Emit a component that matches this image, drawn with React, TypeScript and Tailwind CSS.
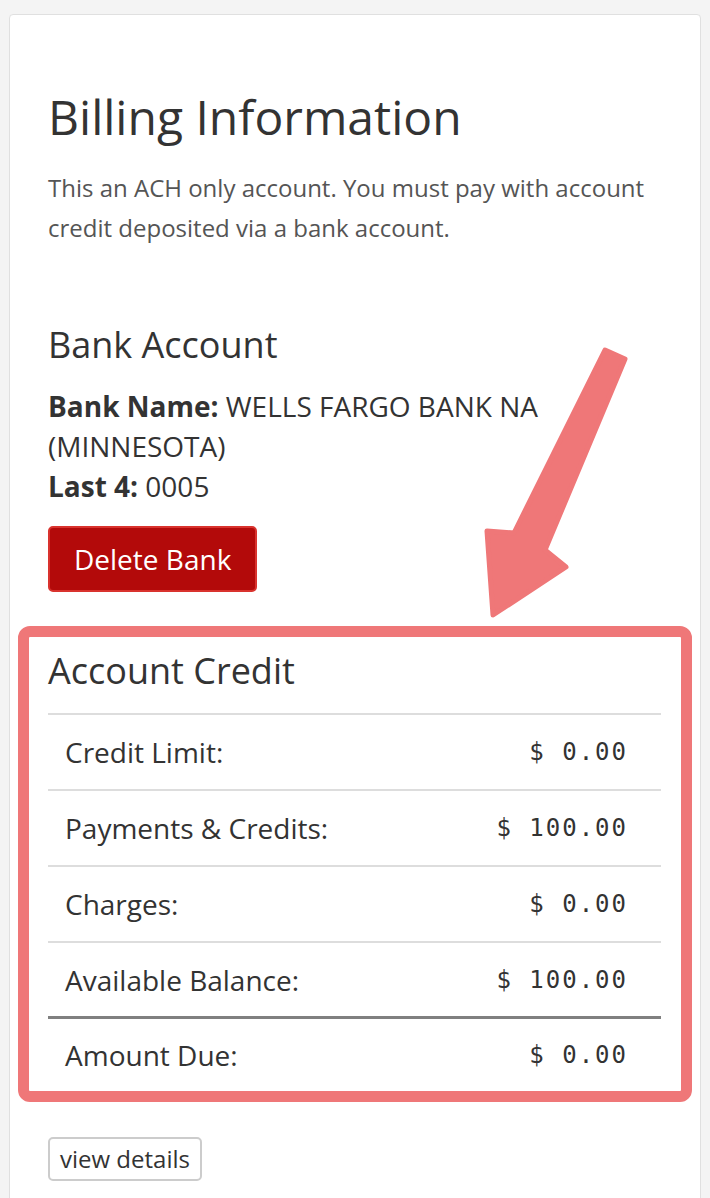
import React from "react";

const rows = [
  { label: "Credit Limit:", value: "$ 0.00" },
  { label: "Payments & Credits:", value: "$ 100.00" },
  { label: "Charges:", value: "$ 0.00" },
  { label: "Available Balance:", value: "$ 100.00" },
];

function Arrow() {
  return (
    <svg
      className="absolute left-0 top-0 pointer-events-none"
      width="710"
      height="700"
      viewBox="0 0 710 700"
    >
      <path
        d="M605 350 L514 533 L487 531 L493 615 L566 567 L545 550 L625 359 Z"
        fill="#ef7778"
        stroke="#ef7778"
        strokeWidth="5"
        strokeLinejoin="round"
      />
    </svg>
  );
}

export default function App() {
  return (
    <div
      className="relative min-h-screen bg-[#f4f4f4] pl-[9px] pr-[9px] pt-[14px]"
      style={{ fontFamily: '"Open Sans", sans-serif' }}
    >
      <div className="bg-white border border-[#e0e0e0] rounded-[4px] px-[38px] pt-[76px] pb-[30px]">
        {/* Heading */}
        <h1 className="text-[48px] leading-[1.1] text-[#333]">Billing Information</h1>
        <p className="mt-[24px] text-[24px] leading-[40px] text-[#555]">
          This an ACH only account. You must pay with account credit deposited via a bank account.
        </p>

        {/* Bank account */}
        <h3 className="mt-[75px] text-[36px] leading-[1.2] text-[#333]">Bank Account</h3>
        <div className="mt-[20px] text-[28px] leading-[40px] text-[#333]">
          <p>
            <b className="font-bold">Bank Name:</b> WELLS FARGO BANK NA (MINNESOTA)
          </p>
          <p>
            <b className="font-bold">Last 4:</b> 0005
          </p>
        </div>
        <button className="mt-[20px] h-[66px] px-[24px] bg-[#b30a0a] border-2 border-[#d9332e] rounded-[5px] text-white text-[28px]">
          Delete Bank
        </button>

        {/* Account credit (highlighted) */}
        <div className="mt-[34px] -mx-[30px] border-[11px] border-[#ef7778] rounded-[12px] px-[19px] pt-[12px]">
          <h3 className="text-[36px] leading-[1.2] text-[#333]">Account Credit</h3>
          <div className="mt-[21px] mr-[1px] border-t-2 border-[#dddddd]">
            {rows.map((r, i) => (
              <div
                key={r.label}
                className={`flex items-center justify-between h-[76px] pl-[17px] pr-[33px] ${
                  i === rows.length - 1 ? "border-b-[3px] border-[#808080]" : "border-b-2 border-[#dddddd]"
                }`}
              >
                <span className="text-[28px] text-[#333]">{r.label}</span>
                <span
                  className="text-[24px] tracking-[2px] text-[#333]"
                  style={{ fontFamily: '"DejaVu Sans Mono", monospace' }}
                >
                  {r.value}
                </span>
              </div>
            ))}
            <div className="flex items-center justify-between h-[72px] pl-[17px] pr-[33px]">
              <span className="text-[28px] text-[#333]">Amount Due:</span>
              <span
                className="text-[24px] tracking-[2px] text-[#333]"
                style={{ fontFamily: '"DejaVu Sans Mono", monospace' }}
              >
                $ 0.00
              </span>
            </div>
          </div>
        </div>

        <button className="mt-[35px] h-[44px] px-[10px] border-2 border-[#cccccc] rounded-[5px] text-[24px] text-[#333] bg-white">
          view details
        </button>
      </div>
      <Arrow />
    </div>
  );
}
